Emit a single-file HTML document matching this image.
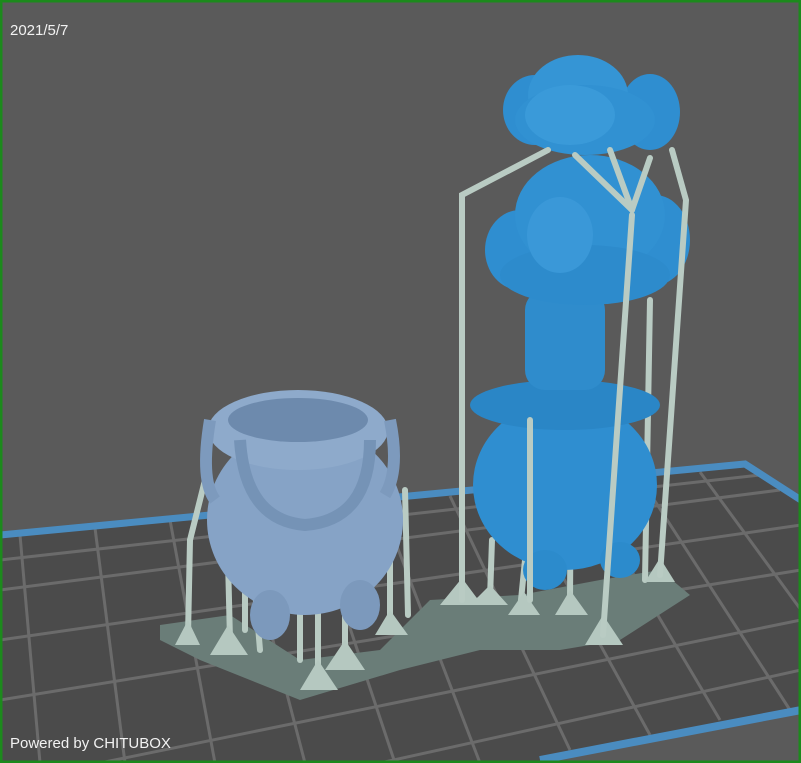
<!DOCTYPE html>
<html><head><style>
html,body{margin:0;padding:0;width:801px;height:763px;overflow:hidden;background:#5a5a5a}
.t{position:absolute;font-family:"Liberation Sans",sans-serif;color:#f2f2f2;font-size:15px}
</style></head><body>
<svg width="801" height="763" style="position:absolute;left:0;top:0">
<rect width="801" height="763" fill="#5a5a5a"/>
<polygon points="0,532 745,462 801,500 801,710 540,763 0,763" fill="#4b4b4b"/>
<g stroke="#6b6b6b" stroke-width="3" fill="none">
<line x1="0" y1="590" x2="780" y2="490"/>
<line x1="0" y1="640" x2="801" y2="525"/>
<line x1="0" y1="700" x2="801" y2="570"/>
<line x1="100" y1="763" x2="801" y2="620"/>
<line x1="380" y1="763" x2="801" y2="670"/>
<line x1="0" y1="560" x2="760" y2="475"/>
<line x1="20" y1="535" x2="40" y2="763"/>
<line x1="95" y1="528" x2="125" y2="763"/>
<line x1="170" y1="520" x2="215" y2="763"/>
<line x1="240" y1="514" x2="305" y2="763"/>
<line x1="310" y1="508" x2="395" y2="763"/>
<line x1="380" y1="502" x2="480" y2="763"/>
<line x1="450" y1="496" x2="570" y2="750"/>
<line x1="515" y1="490" x2="650" y2="735"/>
<line x1="580" y1="484" x2="720" y2="720"/>
<line x1="640" y1="478" x2="790" y2="710"/>
<line x1="700" y1="472" x2="801" y2="610"/>
</g>
<polyline points="0,535 745,464 801,500" stroke="#4a8cc0" stroke-width="7" fill="none"/>
<polyline points="540,760 801,710" stroke="#4a8cc0" stroke-width="8" fill="none"/>
<polygon points="160,625 230,615 300,660 380,650 430,600 520,595 600,580 660,570 690,595 620,640 560,650 480,650 400,670 300,700 200,660 160,640" fill="#6a7d78"/>
<g stroke="#b9cbc3" stroke-width="6" fill="none" stroke-linecap="round">
<line x1="188" y1="635" x2="190" y2="540"/><line x1="190" y1="540" x2="205" y2="480"/>
<line x1="230" y1="640" x2="228" y2="560"/><line x1="260" y1="650" x2="255" y2="590"/>
<line x1="318" y1="685" x2="318" y2="540"/><line x1="345" y1="650" x2="345" y2="560"/>
<line x1="390" y1="630" x2="390" y2="520"/><line x1="408" y1="615" x2="405" y2="490"/>
<line x1="300" y1="660" x2="300" y2="590"/><line x1="245" y1="630" x2="245" y2="575"/>
<line x1="490" y1="598" x2="492" y2="540"/><line x1="520" y1="610" x2="525" y2="560"/>
<line x1="570" y1="600" x2="572" y2="300"/><line x1="645" y1="580" x2="650" y2="300"/>
</g>
<g fill="#b5c8c0">
<polygon points="175,645 188,620 200,645"/><polygon points="210,655 228,625 248,655"/><polygon points="300,690 318,660 338,690"/>
<polygon points="325,670 345,640 365,670"/><polygon points="375,635 390,610 408,635"/><polygon points="440,605 462,578 482,605"/>
<polygon points="470,605 490,585 508,605"/><polygon points="585,645 603,615 623,645"/><polygon points="645,582 660,558 675,582"/>
<polygon points="555,615 570,590 588,615"/><polygon points="508,615 524,592 540,615"/>
</g>
<!-- left cauldron -->
<ellipse cx="305" cy="520" rx="98" ry="95" fill="#86a3c6"/>
<ellipse cx="298" cy="430" rx="90" ry="40" fill="#8eaacb"/>
<ellipse cx="298" cy="420" rx="70" ry="22" fill="#6d8aad"/>
<ellipse cx="270" cy="615" rx="20" ry="25" fill="#7c99bc"/>
<ellipse cx="360" cy="605" rx="20" ry="25" fill="#7c99bc"/>
<path d="M240,440 Q245,520 305,525 Q370,520 370,440" stroke="#7593b6" stroke-width="12" fill="none"/>
<path d="M210,420 Q200,480 215,500" stroke="#7d9abd" stroke-width="12" fill="none"/>
<path d="M390,420 Q400,470 385,495" stroke="#7d9abd" stroke-width="12" fill="none"/>
<!-- right model -->
<ellipse cx="565" cy="485" rx="92" ry="85" fill="#2f8ed0"/>
<ellipse cx="565" cy="405" rx="95" ry="25" fill="#2a86c6"/>
<ellipse cx="545" cy="570" rx="22" ry="20" fill="#2c8bcc"/>
<ellipse cx="620" cy="560" rx="20" ry="18" fill="#2c8bcc"/>
<rect x="525" y="290" width="80" height="100" rx="20" fill="#2f8ccc"/>
<!-- middle cloud -->
<ellipse cx="520" cy="250" rx="35" ry="40" fill="#2f8ed0"/>
<ellipse cx="655" cy="240" rx="35" ry="45" fill="#2f8ed0"/>
<ellipse cx="590" cy="215" rx="75" ry="60" fill="#3191d2"/>
<ellipse cx="585" cy="275" rx="85" ry="30" fill="#2d8bcc"/>
<ellipse cx="560" cy="235" rx="33" ry="38" fill="#3a98d8"/>
<!-- top cloud -->
<ellipse cx="535" cy="110" rx="32" ry="35" fill="#2f8ed0"/>
<ellipse cx="650" cy="112" rx="30" ry="38" fill="#2f8ed0"/>
<ellipse cx="578" cy="95" rx="50" ry="40" fill="#3595d5"/>
<ellipse cx="585" cy="120" rx="70" ry="35" fill="#3191d2"/>
<ellipse cx="570" cy="115" rx="45" ry="30" fill="#3a9ad9"/>
<g stroke="#b9cbc3" stroke-width="6" fill="none" stroke-linecap="round">
<polyline points="462,600 462,195 548,150"/>
<line x1="603" y1="635" x2="632" y2="215"/><line x1="632" y1="210" x2="575" y2="155"/><line x1="632" y1="210" x2="610" y2="150"/><line x1="632" y1="210" x2="650" y2="158"/>
<polyline points="660,575 686,200 672,150"/>
<line x1="530" y1="600" x2="530" y2="420"/>
</g>
<rect x="1" y="1" width="799" height="761" fill="none" stroke="#1c8a1c" stroke-width="3"/>
</svg>
<div class="t" style="left:10px;top:22px">2021/5/7</div>
<div class="t" style="left:10px;top:735px">Powered by CHITUBOX</div>
</body></html>
